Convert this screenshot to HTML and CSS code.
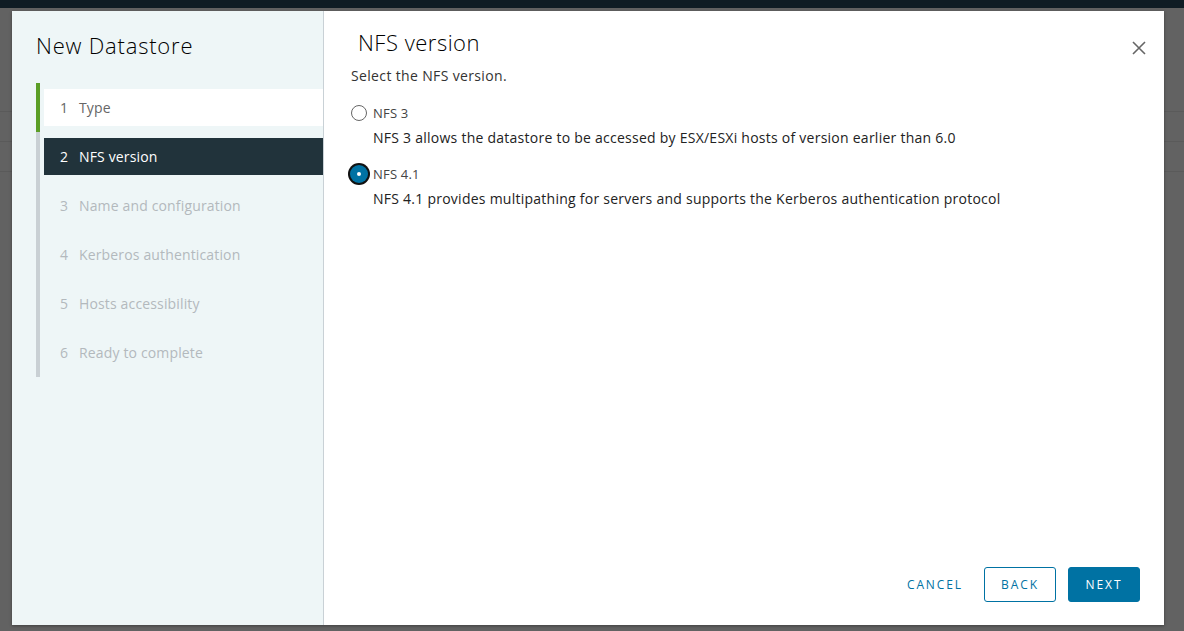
FILE: index.html
```html
<!DOCTYPE html>
<html>
<head>
<meta charset="utf-8">
<link rel="stylesheet" href="styles.css">
</head>
<body>
<div class="app">
  <div class="topbar"></div>
  <div class="page">
    <div class="page-rows">
      <div class="row"></div>
      <div class="row"></div>
      <div class="row"></div>
    </div>
  </div>
</div>
<div class="backdrop"></div>
<div class="modal">
  <aside class="nav">
    <h1 class="nav-title">New Datastore</h1>
    <ol class="steps">
      <li class="step done"><div class="step-box"><span class="num">1</span><span>Type</span></div></li>
      <li class="step active"><div class="step-box"><span class="num">2</span><span>NFS version</span></div></li>
      <li class="step"><div class="step-box"><span class="num">3</span><span>Name and configuration</span></div></li>
      <li class="step"><div class="step-box"><span class="num">4</span><span>Kerberos authentication</span></div></li>
      <li class="step"><div class="step-box"><span class="num">5</span><span>Hosts accessibility</span></div></li>
      <li class="step"><div class="step-box"><span class="num">6</span><span>Ready to complete</span></div></li>
    </ol>
  </aside>
  <section class="content">
    <header class="content-head">
      <h2 class="content-title">NFS version</h2>
      <button class="close" aria-label="Close">
        <svg width="14" height="14" viewBox="0 0 14 14"><path d="M1 1 L13 13 M13 1 L1 13" stroke="#666" stroke-width="1.6" fill="none"/></svg>
      </button>
    </header>
    <div class="body">
      <p class="lead">Select the NFS version.</p>
      <div class="option">
        <label class="radio-row"><span class="radio"></span><span class="radio-label">NFS 3</span></label>
        <p class="desc">NFS 3 allows the datastore to be accessed by ESX/ESXi hosts of version earlier than 6.0</p>
      </div>
      <div class="option">
        <label class="radio-row"><span class="radio checked"></span><span class="radio-label">NFS 4.1</span></label>
        <p class="desc">NFS 4.1 provides multipathing for servers and supports the Kerberos authentication protocol</p>
      </div>
    </div>
    <footer class="footer">
      <button class="btn btn-link">CANCEL</button>
      <button class="btn btn-outline">BACK</button>
      <button class="btn btn-primary">NEXT</button>
    </footer>
  </section>
</div>
</body>
</html>
```

FILE: styles.css
```css
* { box-sizing: border-box; }
html, body { margin: 0; padding: 0; }
body {
  width: 1184px;
  height: 631px;
  overflow: hidden;
  font-family: "Open Sans", "Noto Sans", sans-serif;
  background: #636363;
  position: relative;
}
.app { display: flex; flex-direction: column; height: 631px; }
.topbar { height: 8px; background: #0f1c24; }
.page { flex: 1; background: #f4f4f4; }
.page-rows { padding-top: 90px; display: flex; flex-direction: column; gap: 16px; }
.row { height: 14px; border-bottom: 1px solid #e0e0e0; }
.backdrop {
  position: absolute;
  left: 0; right: 0; top: 8px; bottom: 0;
  background: rgba(0, 0, 0, 0.6);
}
.modal {
  position: absolute;
  left: 12px;
  top: 11px;
  width: 1152px;
  height: 614px;
  display: flex;
  background: #fff;
  box-shadow: 0 1px 3px rgba(0,0,0,0.35);
}
.nav {
  width: 312px;
  flex: none;
  background: #eef6f7;
  border-right: 1px solid #c9d1d6;
  padding: 20px 0 0 24px;
}
.nav-title {
  margin: 0;
  font-size: 22px;
  font-weight: 300;
  color: #000;
  line-height: 28px;
  letter-spacing: 0.8px;
}
.steps {
  list-style: none;
  margin: 24px 0 0 0;
  padding: 0;
}
.step {
  border-left: 4px solid #c9d0d4;
  padding: 6px 0 6px 4px;
}
.step.done { border-left-color: #5b9e26; }
.step-box {
  height: 37px;
  display: flex;
  align-items: center;
  padding-left: 16px;
  font-size: 14px;
  color: #b3b9bd;
  letter-spacing: 0.15px;
  padding-bottom: 1px;
}
.num { width: 19px; }
.step.done .step-box { background: #fff; color: #666; }
.step.active .step-box { background: #21333b; color: #fff; }

.content {
  flex: 1;
  display: flex;
  flex-direction: column;
  padding: 0 24px 23px 27px;
}
.content-head {
  display: flex;
  align-items: center;
  justify-content: space-between;
  padding-top: 17px;
}
.content-title {
  margin: 0 0 0 7px;
  font-size: 22px;
  font-weight: 300;
  color: #000;
  line-height: 28px;
  letter-spacing: 0.5px;
}
.close {
  border: 0;
  background: none;
  padding: 0;
  margin: 11px -6px 0 0;
  width: 14px;
  height: 14px;
  display: flex;
}
.body { flex: 1; }
.lead {
  margin: 10px 0 0 0;
  font-size: 14px;
  line-height: 20px;
  color: #333;
  letter-spacing: 0.35px;
}
.option { margin-top: 18px; }
.option + .option { margin-top: 17px; }
.radio-row { display: flex; align-items: center; gap: 6px; height: 18px; }
.radio {
  width: 16px;
  height: 16px;
  border-radius: 50%;
  border: 1px solid #666;
  background: #fff;
  flex: none;
}
.radio.checked {
  border: 5px solid #0072a3;
  background: #fff;
  box-shadow: 0 0 0 2px #0072a3, 0 0 0 4px #111;
  width: 14px;
  height: 14px;
  margin: 0 1px;
}
.radio-label { font-size: 13px; color: #444; letter-spacing: 0.2px; }
.desc {
  margin: 6px 0 0 22px;
  font-size: 14px;
  line-height: 20px;
  color: #222;
  letter-spacing: 0.25px;
}
.footer {
  display: flex;
  justify-content: flex-end;
  align-items: center;
  gap: 12px;
}
.btn {
  height: 35px;
  font-family: inherit;
  font-size: 12px;
  font-weight: 500;
  letter-spacing: 1.9px;
  border-radius: 3px;
  padding: 0;
  cursor: pointer;
}
.btn-link { background: none; border: 1px solid transparent; color: #0072a3; margin-right: 8px; padding: 0 0 0 4px; }
.btn-outline { background: #fff; border: 1px solid #0072a3; color: #0072a3; width: 72px; }
.btn-primary { background: #0072a3; border: 1px solid #0072a3; color: #fff; width: 72px; }
```
